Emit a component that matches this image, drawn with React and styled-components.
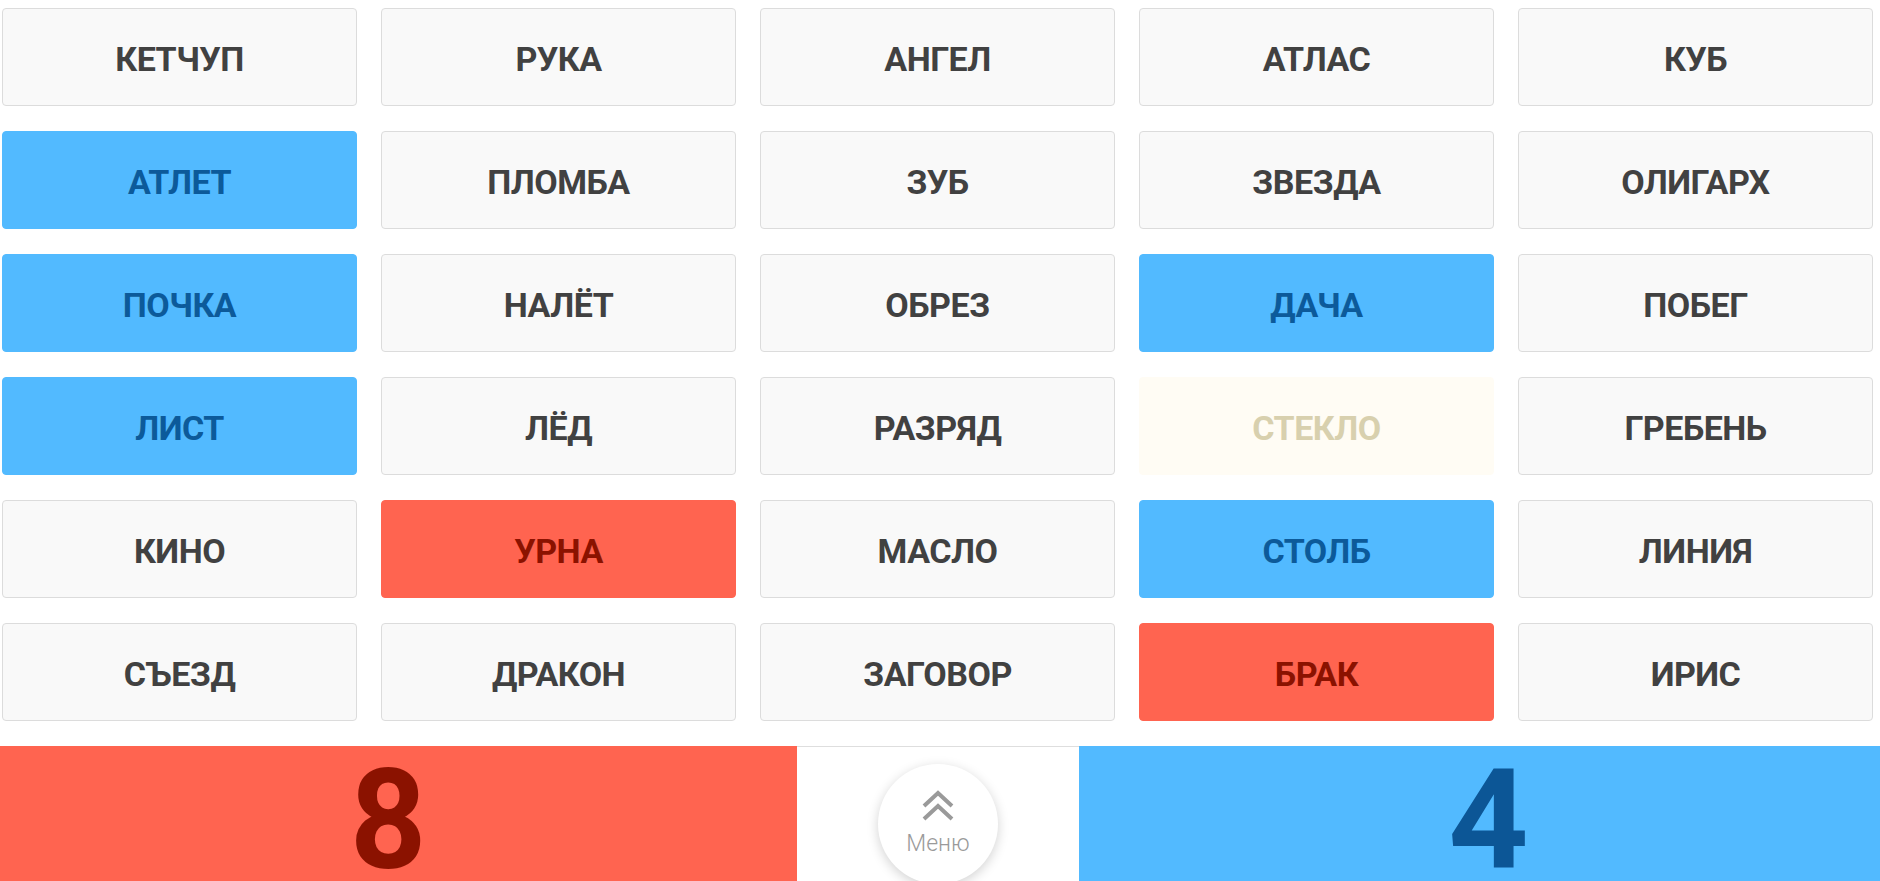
import React from "react";
import styled, { createGlobalStyle } from "styled-components";

const Global = createGlobalStyle`
  html, body { margin: 0; padding: 0; background: #fff; }
  body { font-family: Roboto, "Noto Sans", sans-serif; overflow: hidden; }
  * { box-sizing: border-box; }
`;

const Page = styled.div`
  width: 1880px;
  height: 881px;
  display: flex;
  flex-direction: column;
  overflow: hidden;
`;

const Board = styled.div`
  display: grid;
  grid-template-columns: repeat(5, 355px);
  grid-auto-rows: 98px;
  column-gap: 24px;
  row-gap: 25px;
  padding: 8px 0 25px 2px;
`;

const palette = {
  neutral: { bg: "#f9f9f9", border: "#dcdcdc", fg: "#414141" },
  blue: { bg: "#52baff", border: "#52baff", fg: "#0c5a9a" },
  red: { bg: "#ff6450", border: "#ff6450", fg: "#8b1200" },
  neutralOpen: { bg: "#fffcf4", border: "#fffcf4", fg: "#d8d0ae" },
};

const Card = styled.div`
  display: flex;
  align-items: center;
  justify-content: center;
  padding-top: 4px;
  border-radius: 4px;
  background: ${(p) => palette[p.$kind].bg};
  border: 1px solid ${(p) => palette[p.$kind].border};
  color: ${(p) => palette[p.$kind].fg};
  font-family: Roboto, sans-serif;
  font-weight: 700;
  font-size: 34px;
  letter-spacing: -0.5px;
  text-transform: uppercase;
`;

const Footer = styled.div`
  display: flex;
  height: 135px;
`;

const Score = styled.div`
  width: ${(p) => p.$w}px;
  background: ${(p) => (p.$team === "red" ? "#ff6450" : "#52baff")};
  color: ${(p) => (p.$team === "red" ? "#8b1200" : "#0c5696")};
  display: flex;
  justify-content: center;
  font-family: Roboto, sans-serif;
  font-weight: 700;
  font-size: 140px;
  line-height: 1;
  padding-top: 4px;
  padding-left: ${(p) => p.$padL || 0}px;
  padding-right: ${(p) => p.$padR || 0}px;
`;

const Digit = styled.span`
  display: inline-block;
  transform: scaleX(0.95);
`;

const Middle = styled.div`
  flex: 1;
  border-top: 1px solid #dedede;
  display: flex;
  justify-content: center;
  padding-top: 17px;
`;

const MenuButton = styled.div`
  width: 120px;
  height: 120px;
  border-radius: 50%;
  background: #fff;
  box-shadow: 0 3px 12px rgba(0, 0, 0, 0.18);
  display: flex;
  flex-direction: column;
  align-items: center;
  padding-top: 26px;
  color: #9a9a9a;
`;

const MenuLabel = styled.span`
  margin-top: 10px;
  font-family: Roboto, sans-serif;
  font-weight: 300;
  font-size: 23px;
  line-height: 1;
  color: #9a9a9a;
`;

const words = [
  ["Кетчуп", "neutral"], ["Рука", "neutral"], ["Ангел", "neutral"], ["Атлас", "neutral"], ["Куб", "neutral"],
  ["Атлет", "blue"], ["Пломба", "neutral"], ["Зуб", "neutral"], ["Звезда", "neutral"], ["Олигарх", "neutral"],
  ["Почка", "blue"], ["Налёт", "neutral"], ["Обрез", "neutral"], ["Дача", "blue"], ["Побег", "neutral"],
  ["Лист", "blue"], ["Лёд", "neutral"], ["Разряд", "neutral"], ["Стекло", "neutralOpen"], ["Гребень", "neutral"],
  ["Кино", "neutral"], ["Урна", "red"], ["Масло", "neutral"], ["Столб", "blue"], ["Линия", "neutral"],
  ["Съезд", "neutral"], ["Дракон", "neutral"], ["Заговор", "neutral"], ["Брак", "red"], ["Ирис", "neutral"],
];

const Chevrons = () => (
  <svg width="34" height="32" viewBox="0 0 34 32" fill="none" stroke="#9a9a9a" strokeWidth="4" strokeLinecap="butt" strokeLinejoin="miter">
    <polyline points="3,16 17,3 31,16" />
    <polyline points="3,29 17,16 31,29" />
  </svg>
);

export default function App() {
  return (
    <Page>
      <Global />
      <Board>
        {words.map(([w, k]) => (
          <Card key={w} $kind={k}>{w}</Card>
        ))}
      </Board>
      <Footer>
        <Score $team="red" $w={797} $padR={20}><Digit>8</Digit></Score>
        <Middle>
          <MenuButton>
            <Chevrons />
            <MenuLabel>Меню</MenuLabel>
          </MenuButton>
        </Middle>
        <Score $team="blue" $w={801} $padL={18}>4</Score>
      </Footer>
    </Page>
  );
}
